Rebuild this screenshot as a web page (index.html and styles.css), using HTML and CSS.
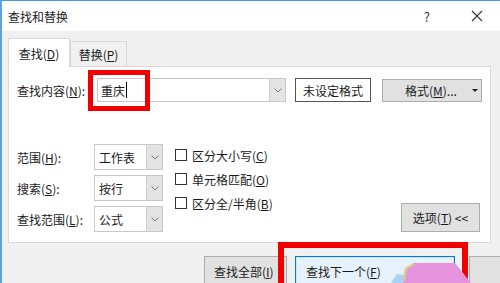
FILE: index.html
```html
<!DOCTYPE html>
<html lang="zh-CN">
<head>
  <meta charset="UTF-8" />
  <title>查找和替换</title>
  <link rel="stylesheet" href="styles.css">
</head>
<body>
  <div class="window">

    <!-- Barre de titre -->
    <div class="titlebar">
      <span class="title">查找和替换</span>
      <span class="help">?</span>
      <svg class="close" width="12" height="12" viewBox="0 0 12 12">
        <path d="M1 1 L11 11 M11 1 L1 11" stroke="#333" stroke-width="1.1" fill="none"/>
      </svg>
    </div>

    <div class="body">
      <!-- Onglets -->
      <div class="tabs">
        <div class="tab active"><span>查找(<u>D</u>)</span></div>
        <div class="tab"><span>替换(<u>P</u>)</span></div>
      </div>

      <div class="panel">
        <div class="find-row">
          <span class="lbl lbl-find">查找内容(<u>N</u>):</span>
          <div class="combo">
            <span class="combo-text">重庆<span class="caret"></span></span>
            <span class="drop">
              <svg width="8" height="5" viewBox="0 0 8 5"><path d="M0.5 0.5 L4 4 L7.5 0.5" stroke="#777" fill="none"/></svg>
            </span>
          </div>
          <button class="btn btn-status">未设定格式</button>
          <button class="btn btn-format"><span>格式(<u>M</u>)...</span><span class="tri"></span></button>
        </div>

        <div class="opts">
          <div class="sel-grid">
            <span class="lbl">范围(<u>H</u>):</span>
            <div class="select"><span class="select-text">工作表</span><span class="drop"><svg width="8" height="5" viewBox="0 0 8 5"><path d="M0.5 0.5 L4 4 L7.5 0.5" stroke="#777" fill="none"/></svg></span></div>
            <span class="lbl">搜索(<u>S</u>):</span>
            <div class="select"><span class="select-text">按行</span><span class="drop"><svg width="8" height="5" viewBox="0 0 8 5"><path d="M0.5 0.5 L4 4 L7.5 0.5" stroke="#777" fill="none"/></svg></span></div>
            <span class="lbl">查找范围(<u>L</u>):</span>
            <div class="select"><span class="select-text">公式</span><span class="drop"><svg width="8" height="5" viewBox="0 0 8 5"><path d="M0.5 0.5 L4 4 L7.5 0.5" stroke="#777" fill="none"/></svg></span></div>
          </div>

          <div class="checks">
            <label class="check"><span class="box"></span><span>区分大小写(<u>C</u>)</span></label>
            <label class="check"><span class="box"></span><span>单元格匹配(<u>O</u>)</span></label>
            <label class="check"><span class="box"></span><span>区分全/半角(<u>B</u>)</span></label>
          </div>

          <button class="btn btn-options"><span>选项(<u>T</u>) &lt;&lt;</span></button>
        </div>
      </div>

      <!-- Boutons du bas -->
      <div class="actions">
        <button class="btn btn-all"><span>查找全部(<u>I</u>)</span></button>
        <button class="btn btn-next"><span>查找下一个(<u>F</u>)</span></button>
        <button class="btn btn-close"></button>
      </div>
    </div>

    <!-- Annotations -->
    <div class="mark mark-find"></div>
    <div class="mark mark-next"></div>
    <svg class="pointer" width="90" height="28" viewBox="0 0 90 28">
      <polygon points="6,28 12,19 20,20 18,28" fill="#a9d3f2"/>
      <polygon points="18,28 20,13 29,8 70,8 86,28" fill="#e593dc"/>
      <path d="M19 26 L21 14 L29 9" stroke="#d9d27a" stroke-width="2" fill="none"/>
    </svg>
  </div>
</body>
</html>
```

FILE: styles.css
```css
/* === BASE === */
* { margin: 0; padding: 0; box-sizing: border-box; }

body {
  width: 500px;
  height: 283px;
  overflow: hidden;
  font-family: "Noto Sans CJK SC", "Noto Sans", sans-serif;
  font-size: 12px;
  color: #1a1a1a;
  background: #f0f0f0;
}

u { text-decoration: underline; text-underline-offset: 1px; }

.window {
  position: relative;
  width: 500px;
  height: 283px;
  border-top: 1px solid #4c98d8;
  border-left: 2px solid #5aa2e0;
  background: #f0f0f0;
  overflow: hidden;
}

/* === TITLE BAR === */
.titlebar {
  height: 30px;
  background: #fff;
  display: flex;
  align-items: center;
  padding-left: 6px;
}

.title { font-size: 12px; }

.help {
  margin-left: auto;
  font-size: 13px;
  color: #333;
}

.close {
  margin-left: 41px;
  margin-right: 17px;
}

/* === BODY === */
.body {
  padding: 7px 0 0 6px;
}

.tabs {
  display: flex;
  align-items: flex-end;
  height: 28px;
}

.tab {
  height: 25px;
  width: 57px;
  display: flex;
  align-items: center;
  justify-content: center;
  border: 1px solid #d9d9d9;
  border-bottom: none;
  background: #f0f0f0;
}

.tab.active {
  width: 62px;
  height: 29px;
  margin-bottom: -1px;
  background: #fff;
  position: relative;
  z-index: 1;
}

.panel {
  width: 483px;
  height: 177px;
  background: #fff;
  border: 1px solid #d9d9d9;
  padding: 11px 8px 10px 8px;
}

/* === FIND ROW === */
.find-row {
  display: flex;
  align-items: center;
  height: 24px;
}

.lbl-find { width: 80px; }

.combo {
  width: 189px;
  height: 24px;
  border: 1px solid #c8c8c8;
  display: flex;
}

.combo-text {
  flex: 1;
  display: flex;
  align-items: center;
  padding-left: 3px;
  font-size: 12px;
}

.caret {
  display: inline-block;
  width: 1px;
  height: 16px;
  background: #000;
  margin-left: 1px;
}

.drop {
  width: 16px;
  background: #e3e3e3;
  border-left: 1px solid #cfcfcf;
  display: flex;
  align-items: center;
  justify-content: center;
}

.btn {
  font-family: inherit;
  font-size: 12px;
  color: #1a1a1a;
  background: #e1e1e1;
  border: 1px solid #adadad;
  display: flex;
  align-items: center;
}

.btn-status {
  margin-left: 9px;
  width: 76px;
  height: 24px;
  background: #fff;
  border-color: #555;
  justify-content: center;
}

.btn-format {
  margin-left: 11px;
  width: 100px;
  height: 23px;
  padding-left: 22px;
  position: relative;
}

.tri {
  position: absolute;
  right: 3px;
  top: 9px;
  border-left: 3px solid transparent;
  border-right: 3px solid transparent;
  border-top: 3px solid #222;
}

/* === OPTIONS === */
.opts {
  display: flex;
  margin-top: 42px;
}

.sel-grid {
  display: grid;
  grid-template-columns: 77px 69px;
  grid-auto-rows: 26px;
  row-gap: 5px;
  align-items: center;
}

.select {
  height: 26px;
  border: 1px solid #c8c8c8;
  display: flex;
}

.select-text {
  flex: 1;
  display: flex;
  align-items: center;
  padding-left: 4px;
}

.checks {
  margin-left: 12px;
  margin-top: -1px;
  display: flex;
  flex-direction: column;
}

.check {
  height: 24px;
  display: flex;
  align-items: center;
  gap: 5px;
}

.box {
  width: 12px;
  height: 12px;
  border: 1px solid #333;
  background: #fff;
}

.btn-options {
  margin-left: auto;
  margin-right: 2px;
  align-self: flex-end;
  width: 79px;
  height: 29px;
  justify-content: center;
}

/* === ACTIONS === */
.actions {
  display: flex;
  margin-top: 13px;
  padding-left: 196px;
  gap: 8px;
}

.btn-all {
  width: 83px;
  height: 30px;
  padding-left: 9px;
  flex-shrink: 0;
}

.btn-next {
  width: 160px;
  height: 30px;
  padding-left: 10px;
  background: #e5f1fb;
  border: 1px solid #0078d7;
  box-shadow: inset 0 0 0 1px #cce4f7;
  flex-shrink: 0;
}

.btn-close {
  margin-left: 6px;
  width: 80px;
  height: 30px;
  flex-shrink: 0;
}

/* === ANNOTATIONS === */
.mark {
  position: absolute;
  border: 5px solid #f00000;
}

.mark-find {
  left: 86px;
  top: 69px;
  width: 62px;
  height: 41px;
}

.mark-next {
  left: 276px;
  top: 241px;
  width: 190px;
  height: 60px;
  border-width: 6px;
}

.pointer {
  position: absolute;
  left: 383px;
  top: 254px;
}
```
